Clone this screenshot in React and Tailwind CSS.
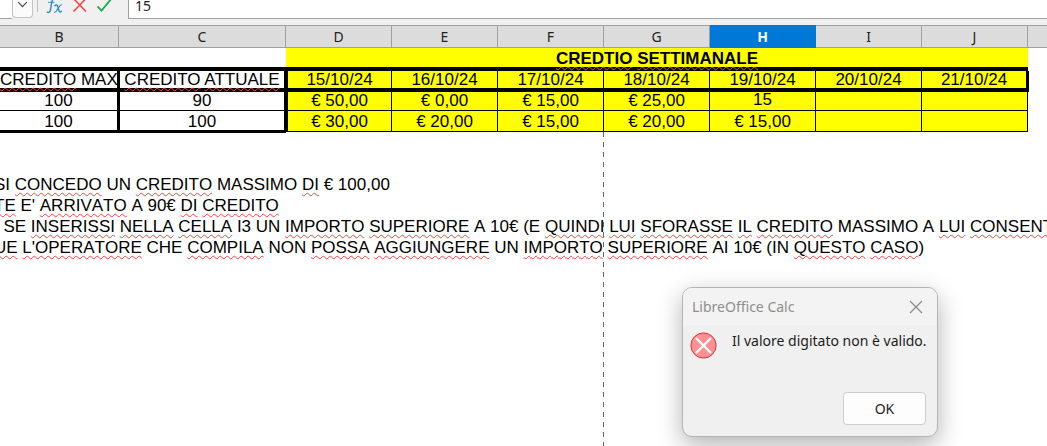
const W = "underline decoration-wavy decoration-[#ff4040] decoration-1 underline-offset-2 [text-decoration-skip-ink:none]";

const letters = ["B", "C", "D", "E", "F", "G", "H", "I", "J"];
const dates = ["15/10/24", "16/10/24", "17/10/24", "18/10/24", "19/10/24", "20/10/24", "21/10/24"];
const amounts = ["€ 50,00", "€ 0,00", "€ 15,00", "€ 25,00", "15", "", ""];
const amounts2 = ["€ 30,00", "€ 20,00", "€ 15,00", "€ 20,00", "€ 15,00", "", ""];

/* Words between underscores are flagged by the spell checker. */
const notes = [
  "SI _CONCEDO_ UN _CREDITO_ MASSIMO _DI_ € 100,00",
  "_TE_ E' _ARRIVATO_ A 90€ _DI_ _CREDITO_",
  "\u00a0\u00a0SE _INSERISSI_ _NELLA_ _CELLA_ I3 UN _IMPORTO_ _SUPERIORE_ A 10€ (E _QUINDI_ _LUI_ _SFORASSE_ _IL_ _CREDITO_ MASSIMO A _LUI_ _CONSENTITO_",
  "_UE_ _L'OPERATORE_ CHE _COMPILA_ NON _POSSA_ _AGGIUNGERE_ UN _IMPORTO_ _SUPERIORE_ AI 10€ (IN _QUESTO_ _CASO_)",
];

function Checked({ text }) {
  return text.split("_").map((part, i) => (i % 2 ? <span key={i} className={W}>{part}</span> : part));
}

function FormulaBar() {
  return (
    <div className="flex h-[25px] items-start bg-[#f0f0f0] font-['Noto_Sans',sans-serif]">
      <div className="h-[19px] w-3 shrink-0 border-b border-[#a0a0a0] bg-white" />
      <button aria-label="Casella nome" className="flex h-[18px] w-[21px] shrink-0 items-start justify-center rounded-b-sm border border-t-0 border-[#c4c4c4] bg-[#fbfbfb]">
        <svg width="11" height="9" viewBox="0 0 11 9" fill="none" stroke="#444" strokeWidth="1.1"><path d="M1.2 2.2 5.5 6.6 9.8 2.2" /></svg>
      </button>
      <div className="ml-1 h-3 w-px bg-[#c0c0c0]" />
      <button aria-label="Creazione guidata funzione" className="ml-2 shrink-0">
        <svg width="18" height="15" viewBox="0 0 18 15" fill="none" stroke="#2f8fd0" strokeLinecap="round">
          <path d="M7.8 -1.5C6.6-1.2 6 1 5.4 4L4.6 9.500C4.200 11.800 3 12.800 1.400 12.300" strokeWidth="1.5" />
          <path d="M2.600 2.300H8" strokeWidth="1.1" />
          <path d="M9 5.700C10.600 4 11.600 5 12.100 7.500C12.700 10.800 13.500 13.300 15.400 11.300" strokeWidth="1.5" />
          <path d="M15.800 4.800C14.300 4.600 13.300 6.400 12.100 8.300C11 10.200 10 12.500 8.500 12.200" strokeWidth="1.1" />
        </svg>
      </button>
      <button aria-label="Annulla" className="ml-2 shrink-0">
        <svg width="16" height="14" viewBox="0 0 16 14" fill="none" stroke="#f0433f" strokeWidth="1.5"><path d="M1.500-1.500 14 11.500M14-1.500 1.500 11.500" /></svg>
      </button>
      <button aria-label="Accetta" className="ml-2 shrink-0">
        <svg width="16" height="14" viewBox="0 0 16 14" fill="none" stroke="#1fab54" strokeWidth="1.800"><path d="M1.500 6.300 5.500 10.600 15-.8" /></svg>
      </button>
      <input aria-label="Riga di digitazione" defaultValue="15" className="ml-4 h-[19px] min-w-0 flex-1 border-b border-l border-[#a0a0a0] bg-white px-1.5 pb-2 text-[14px] leading-[10px] text-[#222] outline-none" />
    </div>
  );
}

function Sheet() {
  return (
    <table className="w-full table-fixed border-separate border-spacing-0 text-center text-[17px] leading-[17px] text-black">
      <colgroup>
        <col className="w-[119px]" />
        <col className="w-[167px]" />
        {dates.map((d) => <col key={d} className="w-[106px]" />)}
        <col />
      </colgroup>
      <thead>
        <tr className="h-[23px] font-['Noto_Sans',sans-serif] text-[14px]">
          {letters.map((l) => (
            <th key={l} scope="col" className={l === "H" ? "border-y border-r border-[#0078d7] bg-[#0078d7] p-0 font-bold text-white" : "border-y border-r border-[#a0a0a0] bg-[#dcdcdc] p-0 font-normal text-[#222]"}>{l}</th>
          ))}
          <th className="border-y border-[#a0a0a0] bg-[#dcdcdc] p-0" />
        </tr>
      </thead>
      <tbody>
        <tr className="h-[23px]">
          <td className="border-b-4 border-black p-0" />
          <td className="border-b-4 border-black p-0" />
          <td colSpan={7} className="border-b-4 border-black bg-[#ffff00] p-0 pt-0.5 font-bold"><span className={W}>CREDTIO</span> <span className={W}>SETTIMANALE</span></td>
          <td className="p-0" />
        </tr>
        <tr className="h-[21px]">
          <td className="border-b-4 border-r-2 border-black p-0 whitespace-nowrap"><span className={W}>CREDITO</span> MAX</td>
          <td className="border-b-4 border-l border-r-2 border-black p-0 whitespace-nowrap"><span className={W}>CREDITO</span> <span className={W}>ATTUALE</span></td>
          {dates.map((d, i) => (
            <td key={d} className={"border-b-4 border-black bg-[#ffff00] p-0 " + (i === 0 ? "border-l-2 border-r" : i === 6 ? "border-r-2" : "border-r")}>{d}</td>
          ))}
          <td className="border-l border-black p-0" />
        </tr>
        <tr className="h-[19px]">
          <td className="border-b border-r-2 border-black p-0 pb-px">100</td>
          <td className="border-b border-l border-r-2 border-black p-0 pb-px">90</td>
          {amounts.map((a, i) => (
            <td key={i} className={"border-b border-r border-black bg-[#ffff00] p-0 pb-px " + (i === 0 ? "border-l-2" : "")}>
              {i === 4 ? <input aria-label="H3" defaultValue={a} className="block h-[17px] w-full bg-transparent pb-px text-center outline-none" /> : a}
            </td>
          ))}
          <td className="p-0" />
        </tr>
        <tr className="h-[21px]">
          <td className="border-b-2 border-r-2 border-black p-0 pt-px shadow-[0_1px_0_#000]">100</td>
          <td className="border-b-2 border-l border-r-2 border-black p-0 pt-px shadow-[0_1px_0_#000]">100</td>
          {amounts2.map((a, i) => (
            <td key={i} className={"border-b border-r border-black bg-[#ffff00] p-0 " + (i === 0 ? "border-l-2" : "")}>{a}</td>
          ))}
          <td className="p-0" />
        </tr>
      </tbody>
    </table>
  );
}

function ErrorDialog() {
  return (
    <div role="alertdialog" aria-labelledby="dlg-title" aria-describedby="dlg-text" className="absolute top-[287px] left-[682px] flex w-64 flex-col overflow-hidden rounded-[10px] border border-[#b4b4b4] bg-[#f0f0f0] font-['Noto_Sans',sans-serif] text-[14px] shadow-[0_8px_24px_rgba(0,0,0,0.3)]">
      <div className="flex h-[37px] items-center justify-between bg-[#f3f3f3] pr-[14px] pl-[9px] text-[#8e8e8e]">
        <span id="dlg-title">LibreOffice Calc</span>
        <button aria-label="Chiudi">
          <svg width="14" height="14" viewBox="0 0 14 14" fill="none" stroke="#8a8a8a" strokeWidth="1.2"><path d="M1 1 13 13M13 1 1 13" /></svg>
        </button>
      </div>
      <div className="flex items-start gap-[15px] pt-1.5 pl-[7px]">
        <svg className="mt-px shrink-0" width="27" height="27" viewBox="0 0 27 27" fill="none">
          <circle cx="13.500" cy="13.500" r="12.600" fill="#ff8f93" stroke="#d6362f" />
          <path d="M6 6 21 21M21 6 6 21" stroke="#fff" strokeWidth="2.400" />
        </svg>
        <p id="dlg-text" className="leading-5 whitespace-nowrap text-[#1c1c1c]">Il valore digitato non è valido.</p>
      </div>
      <div className="flex justify-end pt-[33px] pr-[11px] pb-[11px]">
        <button className="h-[33px] w-[83px] rounded border border-[#cdcdcd] bg-[#fdfdfd] text-[#1c1c1c]">OK</button>
      </div>
    </div>
  );
}

export default function App() {
  return (
    <div className="relative min-h-screen overflow-hidden bg-white font-['Liberation_Sans',Arial,sans-serif]">
      <FormulaBar />
      <Sheet />
      <div className="mt-[42px] -ml-1.5 text-[17px] leading-[21px] whitespace-nowrap text-black [font-kerning:none]">
        {notes.map((n) => <p key={n}><Checked text={n} /></p>)}
      </div>
      <div className="absolute top-[132px] bottom-0 left-[603px] w-px bg-[repeating-linear-gradient(to_bottom,#666_0_5px,transparent_5px_10px)]" />
      <ErrorDialog />
    </div>
  );
}
